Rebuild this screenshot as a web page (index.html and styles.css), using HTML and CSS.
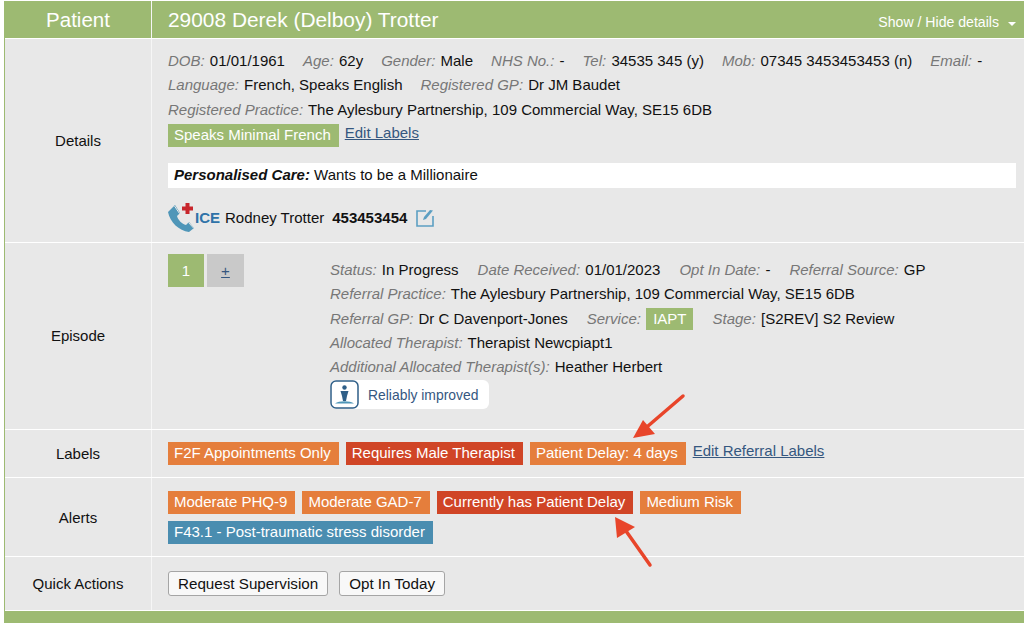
FILE: index.html
```html
<!DOCTYPE html>
<html lang="en">
<head>
<meta charset="utf-8">
<title>Patient</title>
<link rel="stylesheet" href="styles.css">
</head>
<body>
<div class="panel">
  <div class="row head">
    <div class="side">Patient</div>
    <div class="main head-main">
      <span class="title">29008 Derek (Delboy) Trotter</span>
      <span class="toggle">Show / Hide details <i class="caret"></i></span>
    </div>
  </div>

  <div class="row r-details">
    <div class="side">Details</div>
    <div class="main details">
      <div class="line"><em>DOB:</em> 01/01/1961<em class="gap">Age:</em> 62y<em class="gap">Gender:</em> Male<em class="gap">NHS No.:</em> -<em class="gap">Tel:</em> 34535 345 (y)<em class="gap">Mob:</em> 07345 3453453453 (n)<em class="gap">Email:</em> -</div>
      <div class="line"><em>Language:</em> French, Speaks English<em class="gap">Registered GP:</em> Dr JM Baudet</div>
      <div class="line"><em>Registered Practice:</em> The Aylesbury Partnership, 109 Commercial Way, SE15 6DB</div>
      <div class="tags-line"><span class="tag green">Speaks Minimal French</span><a class="link" href="#">Edit Labels</a></div>
      <div class="care"><b><em>Personalised Care:</em></b> Wants to be a Millionaire</div>
      <div class="ice">
        <svg class="ice-icon" width="28" height="29" viewBox="0 0 28 29">
          <path d="M1 9 L8 2 L13 10 L10 13 C11 17 15 21 19 22 L22 19 L27 25 L22 29 C12 28 3 19 1 9 Z" fill="#4f96b8"/>
          <path d="M7.500 3 L12.500 10.500 M21.500 19.500 L26.500 25" stroke="#e8e8e8" stroke-width="1" fill="none"/>
          <path d="M18.500 0 h4 v3.500 h3.500 v4 h-3.500 v3.500 h-4 v-3.500 h-3.500 v-4 h3.500 Z" fill="#c8262c"/>
        </svg>
        <span class="ice-word">ICE</span>
        <span>Rodney Trotter</span>
        <b class="ice-num">453453454</b>
        <svg class="edit-icon" width="18" height="19" viewBox="0 0 18 19">
          <path d="M10 3 H1 V18 H17 V8" fill="none" stroke="#5c9fc2" stroke-width="1.600"/>
          <path d="M7 12 L8 9 L14 2 L17 2.500 L10 11 Z" fill="#5c9fc2"/>
        </svg>
      </div>
    </div>
  </div>

  <div class="row r-episode">
    <div class="side">Episode</div>
    <div class="main episode">
      <div class="ep-tabs">
        <span class="ep-tab on">1</span>
        <span class="ep-tab add"><u>+</u></span>
      </div>
      <div class="ep-info">
        <div class="line"><em>Status:</em> In Progress<em class="gap">Date Received:</em> 01/01/2023<em class="gap">Opt In Date:</em> -<em class="gap">Referral Source:</em> GP</div>
        <div class="line"><em>Referral Practice:</em> The Aylesbury Partnership, 109 Commercial Way, SE15 6DB</div>
        <div class="line"><em>Referral GP:</em> Dr C Davenport-Jones<em class="gap">Service:</em> <span class="tag green small">IAPT</span><em class="gap">Stage:</em> [S2REV] S2 Review</div>
        <div class="line"><em>Allocated Therapist:</em> Therapist Newcpiapt1</div>
        <div class="line"><em>Additional Allocated Therapist(s):</em> Heather Herbert</div>
        <div class="reliable">
          <svg width="29" height="29" viewBox="0 0 29 29">
            <rect x="1" y="1" width="27" height="27" rx="5" fill="#fff" stroke="#2f5f88" stroke-width="1.500"/>
            <circle cx="14.500" cy="7.500" r="2.200" fill="#2f5f88"/>
            <path d="M10.500 11 H18.500 L17 16 L16 21 H13 L12 16 Z" fill="#2f5f88"/>
            <path d="M5 23.500 C9 20.500 20 20.500 24 23.500 Z" fill="#4f96b8"/>
          </svg>
          <span>Reliably improved</span>
        </div>
      </div>
    </div>
  </div>

  <div class="row r-labels">
    <div class="side">Labels</div>
    <div class="main tags">
      <span class="tag orange">F2F Appointments Only</span>
      <span class="tag red">Requires Male Therapist</span>
      <span class="tag orange">Patient Delay: 4 days</span>
      <a class="link" href="#">Edit Referral Labels</a>
    </div>
  </div>

  <div class="row r-alerts">
    <div class="side">Alerts</div>
    <div class="main tags alerts">
      <span class="tag orange">Moderate PHQ-9</span>
      <span class="tag orange">Moderate GAD-7</span>
      <span class="tag red">Currently has Patient Delay</span>
      <span class="tag orange">Medium Risk</span>
      <span class="tag blue">F43.1 - Post-traumatic stress disorder</span>
    </div>
  </div>

  <div class="row r-quick">
    <div class="side">Quick Actions</div>
    <div class="main actions">
      <button class="btn">Request Supervision</button>
      <button class="btn">Opt In Today</button>
    </div>
  </div>

  <div class="foot"></div>
</div>

<svg class="arrow arrow-a" width="60" height="50" viewBox="0 0 60 50">
  <path d="M53 5 L18 35" stroke="#e8452a" stroke-width="3.500" stroke-linecap="round"/>
  <path d="M3 47 L13 29 L25 43 Z" fill="#e8452a"/>
</svg>
<svg class="arrow arrow-b" width="44" height="60" viewBox="0 0 44 60">
  <path d="M41 50 L17 16" stroke="#e8452a" stroke-width="3.500" stroke-linecap="round"/>
  <path d="M6 2 L26 12 L8 23 Z" fill="#e8452a"/>
</svg>
</body>
</html>
```

FILE: styles.css
```css
* { box-sizing: border-box; }
html, body { margin: 0; padding: 0; }
body {
  width: 1024px;
  height: 623px;
  overflow: hidden;
  background: #fff;
  font-family: "Liberation Sans", Arial, sans-serif;
  font-size: 15px;
  color: #111;
  position: relative;
}
.panel {
  margin: 1px 0 0 4px;
  width: 1020px;
  display: flex;
  flex-direction: column;
  border-left: 1px solid #9dba72;
}
.row {
  display: grid;
  grid-template-columns: 146px 1fr;
  column-gap: 1px;
  background: #f6f6f6;
  margin-bottom: 1px;
}
.side {
  background: #e8e8e8;
  display: flex;
  align-items: center;
  justify-content: center;
}
.main { background: #e8e8e8; }
.head { height: 37px; margin-bottom: 1px; }
.head .side, .head .main { background: #9dba72; color: #fff; }
.head .side { font-size: 20.500px; }
.head-main {
  display: flex;
  align-items: center;
  justify-content: space-between;
  padding: 0 8px 0 16px;
}
.title { font-size: 20.900px; }
.toggle { font-size: 14.100px; margin-top: 4px; display: flex; align-items: center; gap: 9px; }
.caret {
  width: 0; height: 0;
  margin-top: 4px;
  border-left: 4px solid transparent;
  border-right: 4px solid transparent;
  border-top: 4px solid #fff;
}
.r-details { height: 203px; }
.r-episode { height: 186px; }
.r-episode > .side { padding-bottom: 2px; }
.r-labels { height: 47px; }
.r-alerts { height: 78px; }
.r-quick { height: 53px; margin-bottom: 0; }
.foot { height: 12px; background: #9dba72; margin-top: 1px; margin-left: -1px; }

em { font-style: italic; color: #777; margin-right: 1px; }
.gap { margin-left: 18px; }
.episode .gap { margin-left: 19px; }
.line { height: 24.300px; line-height: 24.300px; white-space: nowrap; }

.details { padding: 10px 8px 0 16px; }
.tags-line { display: flex; align-items: flex-start; gap: 6px; margin-top: 2px; }
.tag {
  display: inline-block;
  height: 23px;
  line-height: 22px;
  padding: 0 8px 0 6px;
  color: #fff;
  white-space: nowrap;
}
.green { background: #9dba72; }
.orange { background: #e57e3c; }
.red { background: #d04526; }
.blue { background: #4a8db0; }
.small { height: 22px; line-height: 21px; padding: 0 7px; }
.link { color: #35577f; text-decoration: underline; line-height: 20px; }
.tags-line .link { margin-top: -1px; }
.care {
  margin-top: 16px;
  background: #fff;
  height: 25px;
  line-height: 24px;
  padding-left: 6px;
}
.care b em { color: #111; margin-right: 0; }
.ice { display: flex; align-items: center; margin-top: 15px; height: 30px; }
.ice-icon { margin-left: -1px; }
.ice-word { color: #2f73a8; font-weight: bold; margin-right: 5px; }
.ice-num { margin-left: 8px; }
.edit-icon { margin-left: 9px; }

.episode { display: grid; grid-template-columns: 162px 1fr; padding: 11px 0 0 16px; }
.ep-tabs { display: flex; gap: 3px; align-items: flex-start; }
.ep-tab {
  width: 37px;
  height: 33px;
  display: flex;
  align-items: center;
  justify-content: center;
}
.on { width: 36px; background: #9dba72; color: #fff; }
.add { background: #c9c9c9; color: #35577f; }
.ep-info { padding-top: 4px; }
.reliable {
  display: inline-flex;
  align-items: center;
  gap: 9px;
  height: 29px;
  margin-top: 1px;
  padding-right: 11px;
  background: #fff;
  border-radius: 6px;
  color: #35577f;
  font-size: 13.900px;
}

.tags { display: flex; flex-wrap: wrap; align-items: flex-start; column-gap: 7px; row-gap: 7px; padding: 12px 0 0 16px; align-content: flex-start; }
.tags .link { margin-top: -1px; }
.alerts { padding-top: 13px; padding-right: 260px; }

.actions { display: flex; align-items: flex-start; gap: 11px; padding: 14px 0 0 16px; }
.btn {
  height: 25px;
  padding: 0 9px;
  font-family: inherit;
  font-size: 15.200px;
  color: #111;
  background: #f8f8f8;
  border: 1px solid #a5a5a5;
  border-radius: 3px;
}

.arrow { position: absolute; }
.arrow-a { left: 630px; top: 391px; }
.arrow-b { left: 609px; top: 515px; }
```
